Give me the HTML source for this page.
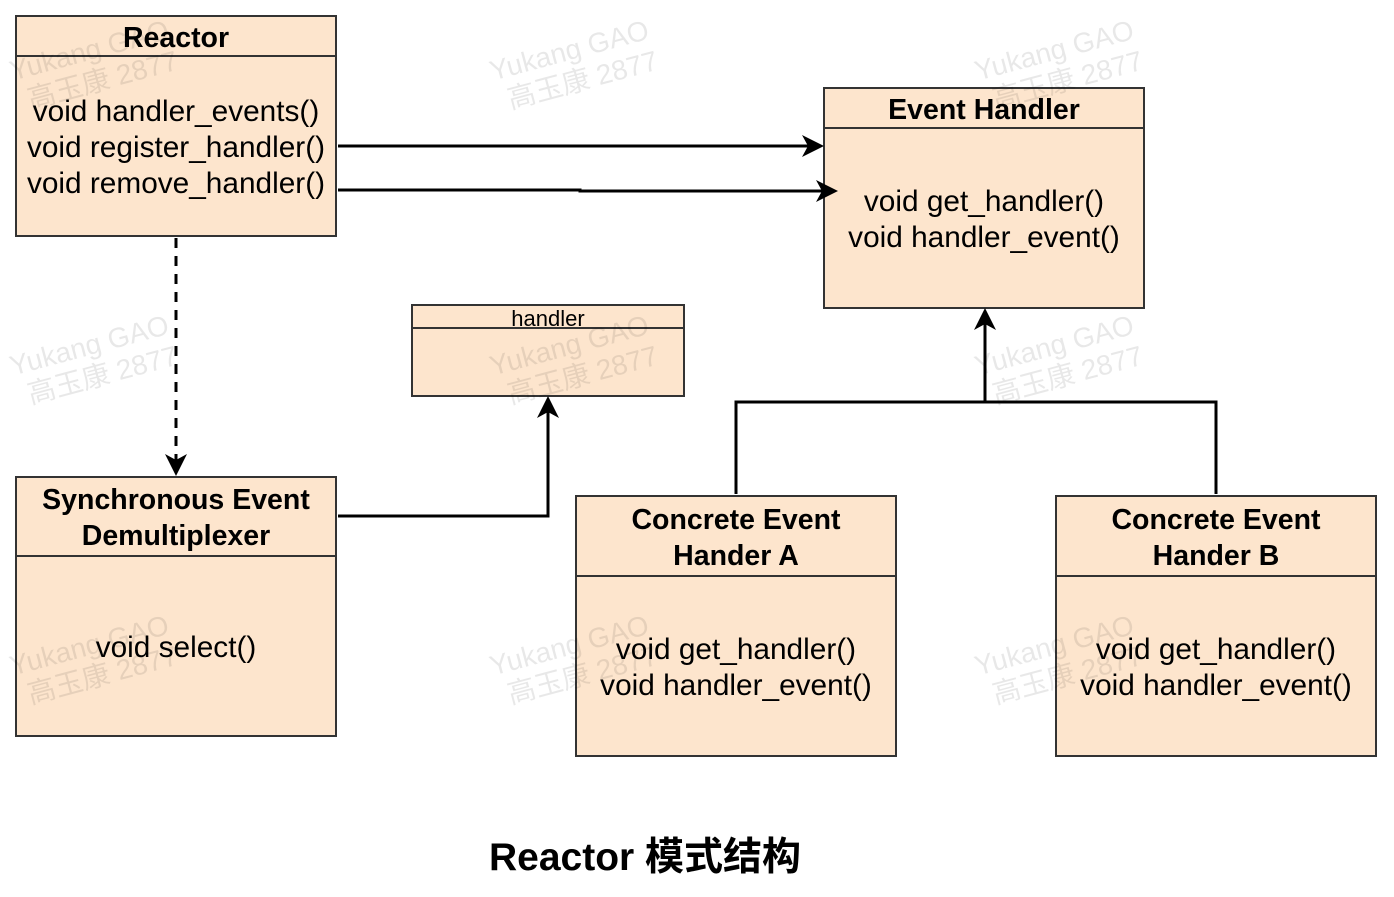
<!DOCTYPE html>
<html><head><meta charset="utf-8"><style>
html,body{margin:0;padding:0;background:#fff;}
svg{display:block;}
text{font-family:"Liberation Sans","Noto Sans CJK SC",sans-serif;fill:#000;}
.b{font-weight:bold;font-size:28.5px;}
.wm text{fill:#000;fill-opacity:0.09;font-size:28px;}
</style></head><body>
<svg width="1394" height="897" viewBox="0 0 1394 897">
<defs>
<marker id="ar2" markerWidth="22" markerHeight="22" refX="18" refY="11" orient="auto" markerUnits="userSpaceOnUse">
<path d="M0,0 L22,11 L0,22 L6,11 Z" fill="#000"/></marker>
</defs>
<g fill="#fde5cd" stroke="#333" stroke-width="2">
<rect x="16" y="16" width="320" height="220"/><line x1="16" y1="56" x2="336" y2="56"/>
<rect x="824" y="88" width="320" height="220"/><line x1="824" y1="128" x2="1144" y2="128"/>
<rect x="412" y="305" width="272" height="91"/><line x1="412" y1="328" x2="684" y2="328"/>
<rect x="16" y="477" width="320" height="259"/><line x1="16" y1="556" x2="336" y2="556"/>
<rect x="576" y="496" width="320" height="260"/><line x1="576" y1="576" x2="896" y2="576"/>
<rect x="1056" y="496" width="320" height="260"/><line x1="1056" y1="576" x2="1376" y2="576"/>
</g>
<g fill="none" stroke="#000" stroke-width="3">
<path d="M338,146 H820" marker-end="url(#ar2)"/>
<path d="M338,190 H580 V191 H834" marker-end="url(#ar2)"/>
<path d="M176,238 V472" stroke-dasharray="10,8" marker-end="url(#ar2)"/>
<path d="M338,516 H548 V400" marker-end="url(#ar2)"/>
<path d="M736,494 V402 H1216 V494"/>
<path d="M985,402 V312" marker-end="url(#ar2)"/>
</g>
<g text-anchor="middle" font-size="29.8">
<text x="176" y="47" class="b">Reactor</text>
<text x="176" y="121">void handler_events()</text>
<text x="176" y="157">void register_handler()</text>
<text x="176" y="193">void remove_handler()</text>
<text x="984" y="119" class="b">Event Handler</text>
<text x="984" y="211">void get_handler()</text>
<text x="984" y="247">void handler_event()</text>
<text x="548" y="326" font-size="22">handler</text>
<text x="176" y="509" class="b">Synchronous Event</text>
<text x="176" y="545" class="b">Demultiplexer</text>
<text x="176" y="657">void select()</text>
<text x="736" y="529" class="b">Concrete Event</text>
<text x="736" y="565" class="b">Hander A</text>
<text x="736" y="659">void get_handler()</text>
<text x="736" y="695">void handler_event()</text>
<text x="1216" y="529" class="b">Concrete Event</text>
<text x="1216" y="565" class="b">Hander B</text>
<text x="1216" y="659">void get_handler()</text>
<text x="1216" y="695">void handler_event()</text>
<text x="645" y="870" class="b" style="font-size:39px">Reactor 模式结构</text>
</g>
<g class="wm">
<g transform="rotate(-15 90 60)"><text x="10" y="60">Yukang GAO</text><text x="20" y="92">高玉康 2877</text></g>
<g transform="rotate(-15 570 60)"><text x="490" y="60">Yukang GAO</text><text x="500" y="92">高玉康 2877</text></g>
<g transform="rotate(-15 1055 60)"><text x="975" y="60">Yukang GAO</text><text x="985" y="92">高玉康 2877</text></g>
<g transform="rotate(-15 90 355)"><text x="10" y="355">Yukang GAO</text><text x="20" y="387">高玉康 2877</text></g>
<g transform="rotate(-15 570 355)"><text x="490" y="355">Yukang GAO</text><text x="500" y="387">高玉康 2877</text></g>
<g transform="rotate(-15 1055 355)"><text x="975" y="355">Yukang GAO</text><text x="985" y="387">高玉康 2877</text></g>
<g transform="rotate(-15 90 655)"><text x="10" y="655">Yukang GAO</text><text x="20" y="687">高玉康 2877</text></g>
<g transform="rotate(-15 570 655)"><text x="490" y="655">Yukang GAO</text><text x="500" y="687">高玉康 2877</text></g>
<g transform="rotate(-15 1055 655)"><text x="975" y="655">Yukang GAO</text><text x="985" y="687">高玉康 2877</text></g>
</g>
</svg>
</body></html>
